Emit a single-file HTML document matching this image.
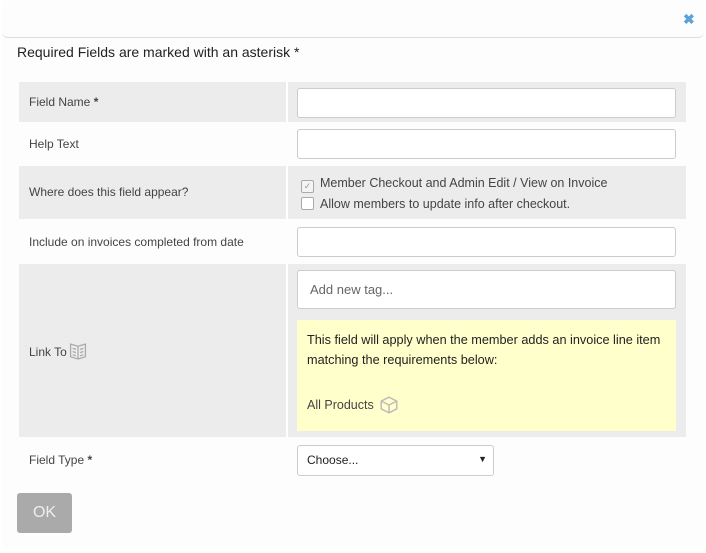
<!DOCTYPE html>
<html><head><style>
body{margin:0;width:706px;height:553px;background:#fff;font-family:"Liberation Sans",sans-serif;color:#333;position:relative;overflow:hidden}
.modal{position:absolute;left:2px;top:0;width:702px;height:548px;background:#fdfdfd;border-radius:4px}
.hdr{position:absolute;left:2px;top:0;width:702px;height:37px;border-bottom:1px solid #ddd;border-radius:0 0 6px 6px}
.x{position:absolute;left:683px;top:11px;color:#5ba3d8;font-weight:bold;font-size:14px}
.req{position:absolute;left:17px;top:44px;font-size:14px;color:#222}
.row{position:absolute;left:19px;width:667px}
.g{background:#ececec}
.lab{position:absolute;left:10px;font-size:12px;color:#444}
.g .div{position:absolute;left:267px;top:0;bottom:0;width:2px;background:#fff}
.inp{position:absolute;left:278px;width:377px;height:28px;border:1px solid #ccc;border-radius:3px;background:#fff}
.cb{position:absolute;left:282px;font-size:12.5px;color:#444}
.box{display:inline-block;width:11px;height:11px;border:1px solid #aaa;border-radius:2px;background:#f4f4f4;vertical-align:-2px;margin-right:6px;font-size:9px;line-height:11px;text-align:center;color:#999}
</style></head><body>
<div class="modal"></div>
<div class="hdr"></div>
<div class="x">✖</div>
<div class="req">Required Fields are marked with an asterisk *</div>

<div class="row g" style="top:82px;height:40px"><div class="div"></div><div class="lab" style="top:13px">Field Name <b>*</b></div><div class="inp" style="top:6px"></div></div>
<div class="row" style="top:122px;height:44px"><div class="lab" style="top:15px">Help Text</div><div class="inp" style="top:7px"></div></div>
<div class="row g" style="top:166px;height:53px"><div class="div"></div><div class="lab" style="top:19px">Where does this field appear?</div>
<div class="cb" style="top:10px"><span class="box">✓</span>Member Checkout and Admin Edit / View on Invoice</div>
<div class="cb" style="top:31px"><span class="box" style="background:#fff"></span>Allow members to update info after checkout.</div></div>
<div class="row" style="top:220px;height:44px"><div class="lab" style="top:15px">Include on invoices completed from date</div><div class="inp" style="top:7px"></div></div>
<div class="row g" style="top:264px;height:173px"><div class="div"></div>
<div class="lab" style="top:78px">Link To<svg width="20" height="18" viewBox="0 0 18 17" style="vertical-align:-4px;margin-left:1px"><path d="M2 2L9 4L16 2V14L9 16L2 14Z M9 4V16 M4 6L7 7 M4 9L7 10 M4 12L7 13 M14 6L11 7 M14 9L11 10 M14 12L11 13" fill="none" stroke="#aaa" stroke-width="1.2"/></svg></div>
<div class="inp" style="top:6px;height:37px"><span style="position:absolute;left:12px;top:11px;font-size:13px;color:#666">Add new tag...</span></div>
<div style="position:absolute;left:278px;top:56px;width:379px;height:111px;background:#ffffcc">
<div style="position:absolute;left:10px;top:10px;font-size:12.7px;line-height:20px;color:#222">This field will apply when the member adds an invoice line item<br>matching the requirements below:</div>
<div style="position:absolute;left:10px;top:75px;font-size:12.5px;color:#444">All Products <svg width="20" height="20" viewBox="0 0 18 18" style="vertical-align:-6px;margin-left:2px"><path d="M9 2L16 5.5V12.5L9 16L2 12.5V5.5Z M2 5.5L9 9L16 5.5 M9 9V16" fill="none" stroke="#bbb" stroke-width="1.3"/></svg></div></div>
</div>
<div class="row" style="top:437px;height:45px"><div class="lab" style="top:16px">Field Type <b>*</b></div>
<div class="inp" style="top:8px;width:195px;height:29px"><span style="position:absolute;left:9px;top:7px;font-size:12px;color:#222">Choose...</span><span style="position:absolute;right:6px;top:8px;font-size:9px;color:#222">▼</span></div></div>
<div style="position:absolute;left:17px;top:493px;width:55px;height:40px;background:#aaa;border-radius:3px;color:#eee;font-size:16px;text-align:center;line-height:40px">OK</div>
</body></html>
